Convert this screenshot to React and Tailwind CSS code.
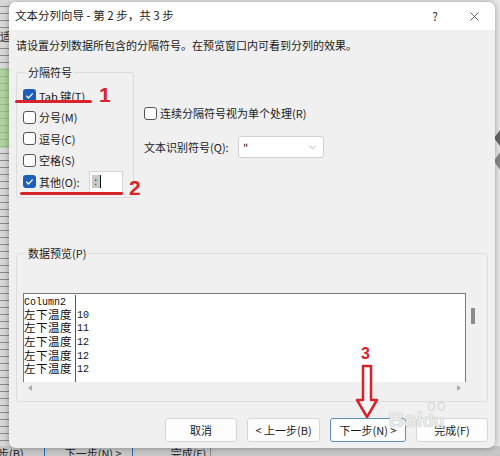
import { X, ChevronDown } from "lucide-react";

const font = { fontFamily: '"Noto Sans CJK SC", "Noto Sans", sans-serif' };

const Check = ({ checked }) => (
  <span
    className={`w-[13px] h-[13px] rounded-[3px] flex items-center justify-center shrink-0 ${
      checked ? "bg-[#1d5fb8]" : "bg-white border border-[#555]"
    }`}
  >
    {checked && (
      <svg width="11" height="11" viewBox="0 0 12 12">
        <path d="M2.5 6.3l2.4 2.4 4.6-5" fill="none" stroke="#fff" strokeWidth="1.4" />
      </svg>
    )}
  </span>
);

const Row = ({ checked, label, children }) => (
  <div className="h-[21.5px] flex items-center gap-[2px]">
    <Check checked={checked} />
    <span className="text-[11px] text-[#1a1a1a] ml-[1px]">{label}</span>
    {children}
  </div>
);

const previewRows = [
  ["Column2", ""],
  ["左下温度", "10"],
  ["左下温度", "11"],
  ["左下温度", "12"],
  ["左下温度", "12"],
  ["左下温度", "12"],
];

const Btn = ({ w, focus, children }) => (
  <button
    className={`h-[24px] ${w} rounded-[3px] text-[11px] text-[#1a1a1a] flex items-center justify-center border ${
      focus ? "border-[#5a8fb8] bg-[#fbfdff]" : "border-[#d6d6d6] bg-[#fdfdfd]"
    }`}
  >
    {children}
  </button>
);

export default function App() {
  return (
    <div className="w-[500px] h-[456px] relative overflow-hidden bg-[#e9e9e9]" style={font}>
      {/* spreadsheet behind the dialog */}
      <div className="absolute left-0 top-0 w-[10px] h-full bg-[repeating-linear-gradient(180deg,#d8d8d8_0px,#d8d8d8_6px,#8a8a8a_6px,#8a8a8a_7px)]" />
      <div className="absolute left-0 top-[68px] w-[10px] h-[80px] bg-[#9fd18b]/70" />
      <div className="absolute left-0 top-[28px] text-[11px] text-[#333]">适</div>
      <div className="absolute right-0 top-[130px] w-0 h-0 border-y-[8px] border-y-transparent border-r-[6px] border-r-[#666]" />
      <div className="absolute right-0 top-[152px] w-0 h-0 border-y-[9px] border-y-transparent border-r-[6px] border-r-[#888]" />
      <div className="absolute left-0 bottom-0 w-full h-[10px] bg-[#c6c6c6] flex items-start gap-[20px] text-[11px] text-[#222] leading-[10px] pt-[2px] overflow-hidden">
        <span className="-ml-[2px]">步(B)</span>
        <span className="border-l border-[#2b6aa8] pl-[20px] pr-[10px] border-r">下一步(N) &gt;</span>
        <span className="pl-[18px] border-r border-[#888] pr-[4px]">完成(F)</span>
      </div>

      {/* dialog */}
      <div className="absolute left-[9px] top-[2px] w-[486px] h-[446px] rounded-[7px] overflow-hidden bg-[#f0f0f0] shadow-[0_0_6px_rgba(0,0,0,0.35)] flex flex-col">
        <div className="h-[28px] bg-white flex items-center pl-[6px] pr-[13px] shrink-0">
          <span className="text-[11.5px] text-[#1a1a1a]">文本分列向导 - 第 2 步，共 3 步</span>
          <span className="ml-auto text-[12px] text-[#333] mr-[29px]">?</span>
          <X size={15} strokeWidth={1.2} color="#333" />
        </div>

        <div className="flex-1 px-[7px] flex flex-col">
          <p className="mt-[7px] h-[16px] text-[11px] leading-[16px] text-[#1a1a1a]">
            请设置分列数据所包含的分隔符号。在预览窗口内可看到分列的效果。
          </p>

          <div className="flex mt-[11px]">
            <fieldset className="w-[118px] h-[134px] border border-[#dcdcdc] rounded-[3px] pl-[6px] pt-[5px] shrink-0">
              <legend className="ml-[3px] px-[2px] text-[11px] leading-[16px] text-[#1a1a1a]">分隔符号</legend>
              <Row checked label="Tab 键(T)" />
              <Row label="分号(M)" />
              <Row label="逗号(C)" />
              <Row label="空格(S)" />
              <Row checked label="其他(O):">
                <div className="ml-[7px] w-[34px] h-[22px] bg-white border border-[#d4d4d4] border-b-[#8a8a8a] flex items-center pl-[2px]">
                  <span className="w-[8px] h-[13px] bg-[#c8c8c8] text-[10px] leading-[12px] text-center text-[#222]">:</span>
                  <span className="w-px h-[13px] bg-[#111]" />
                </div>
              </Row>
            </fieldset>

            <div className="pl-[10px] pt-[41px] flex flex-col">
              <div className="h-[16px] flex items-center gap-[1px]">
                <Check />
                <span className="text-[11px] text-[#1a1a1a] ml-[2px]">连续分隔符号视为单个处理(R)</span>
              </div>
              <div className="mt-[15px] flex items-center">
                <span className="text-[11px] text-[#1a1a1a] w-[94px]">文本识别符号(Q):</span>
                <div className="w-[86px] h-[22px] bg-white border border-[#d0d0d0] rounded-[3px] flex items-center pl-[4px] pr-[5px]">
                  <span className="text-[11px] text-[#222]">"</span>
                  <ChevronDown size={11} strokeWidth={1.2} color="#777" className="ml-auto" />
                </div>
              </div>
            </div>
          </div>

          <fieldset className="mt-[47px] h-[157px] border border-[#dcdcdc] rounded-[3px] pl-[6px] pt-[32px]">
            <legend className="ml-[3px] px-[2px] text-[11px] leading-[16px] text-[#1a1a1a]">数据预览(P)</legend>
            <div className="flex">
              <div className="w-[443px] flex flex-col">
                <div className="h-[89px] bg-white border-t border-x border-[#7a7a7a] flex pt-[1px] overflow-hidden">
                  <div className="w-[52px] border-r border-[#555] flex flex-col">
                    {previewRows.map((r, i) => (
                      <div key={i} className="h-[13.7px] leading-[13.7px] text-[11.5px] text-[#111] whitespace-nowrap" style={{ fontFamily: '"Liberation Mono", "Noto Sans CJK SC", monospace' }}>
                        {r[0] === "Column2" ? <span className="text-[10px]">Column2</span> : <span className="tracking-[0.5px]">{r[0]}</span>}
                      </div>
                    ))}
                  </div>
                  <div className="flex flex-col pl-[1px]">
                    {previewRows.map((r, i) => (
                      <div key={i} className="h-[13.7px] leading-[13.7px] text-[10px] text-[#111]" style={{ fontFamily: '"Liberation Mono", monospace' }}>
                        {r[1]}
                      </div>
                    ))}
                  </div>
                </div>
                <div className="h-[11px] flex items-center justify-between px-[5px]">
                  <span className="w-0 h-0 border-y-[3px] border-y-transparent border-r-[4px] border-r-[#aaa]" />
                  <span className="w-0 h-0 border-y-[3px] border-y-transparent border-l-[4px] border-l-[#aaa]" />
                </div>
              </div>
              <div className="w-[14px] pt-[15px] flex justify-center">
                <span className="w-[4px] h-[16px] bg-[#8a8a8a] rounded-[1px]" />
              </div>
            </div>
          </fieldset>

          <div className="mt-[16px] flex justify-end gap-[10px]">
            <Btn w="w-[72px]">取消</Btn>
            <Btn w="w-[73px]">&lt; 上一步(B)</Btn>
            <Btn w="w-[76px]" focus>下一步(N) &gt;</Btn>
            <Btn w="w-[72px]">完成(F)</Btn>
          </div>
        </div>
      </div>

      {/* annotations */}
      <div className="absolute left-[15px] top-[100px] w-[77px] h-[3px] rounded-full bg-[#d8232a]" />
      <div className="absolute left-[99px] top-[83px] text-[21px] font-bold leading-[24px] text-[#d8232a]" style={{ fontFamily: '"Liberation Sans", sans-serif' }}>1</div>
      <div className="absolute left-[20px] top-[192px] w-[103px] h-[3px] rounded-full bg-[#d8232a]" />
      <div className="absolute left-[129px] top-[176px] text-[21px] font-bold leading-[24px] text-[#d8232a]" style={{ fontFamily: '"Liberation Sans", sans-serif' }}>2</div>
      <div className="absolute left-[361px] top-[344px] text-[16px] font-bold leading-[20px] text-[#d8232a]" style={{ fontFamily: '"Liberation Sans", sans-serif' }}>3</div>
      <svg className="absolute left-[354px] top-[364px]" width="26" height="56" viewBox="0 0 26 56">
        <path d="M9 2 H17 V36 H23 L13 53 L3 36 H9 Z" fill="#fff" fillOpacity="0.6" stroke="#d8232a" strokeWidth="2.5" strokeLinejoin="round" />
      </svg>

      {/* watermark */}
      <div className="absolute left-[388px] top-[402px] flex flex-col items-center text-white/70 pointer-events-none" style={{ fontFamily: '"Liberation Sans", sans-serif' }}>
        <div className="flex gap-[3px] ml-[40px]">
          <span className="w-[7px] h-[9px] rounded-full border border-[#cfcfcf]" />
          <span className="w-[7px] h-[9px] rounded-full border border-[#cfcfcf]" />
        </div>
        <div className="text-[22px] leading-[22px] font-bold text-[#e8e8e8] [text-shadow:0_0_1px_#aaa] -mt-[2px]">Bai<span className="text-[18px]">du</span></div>
      </div>
    </div>
  );
}
